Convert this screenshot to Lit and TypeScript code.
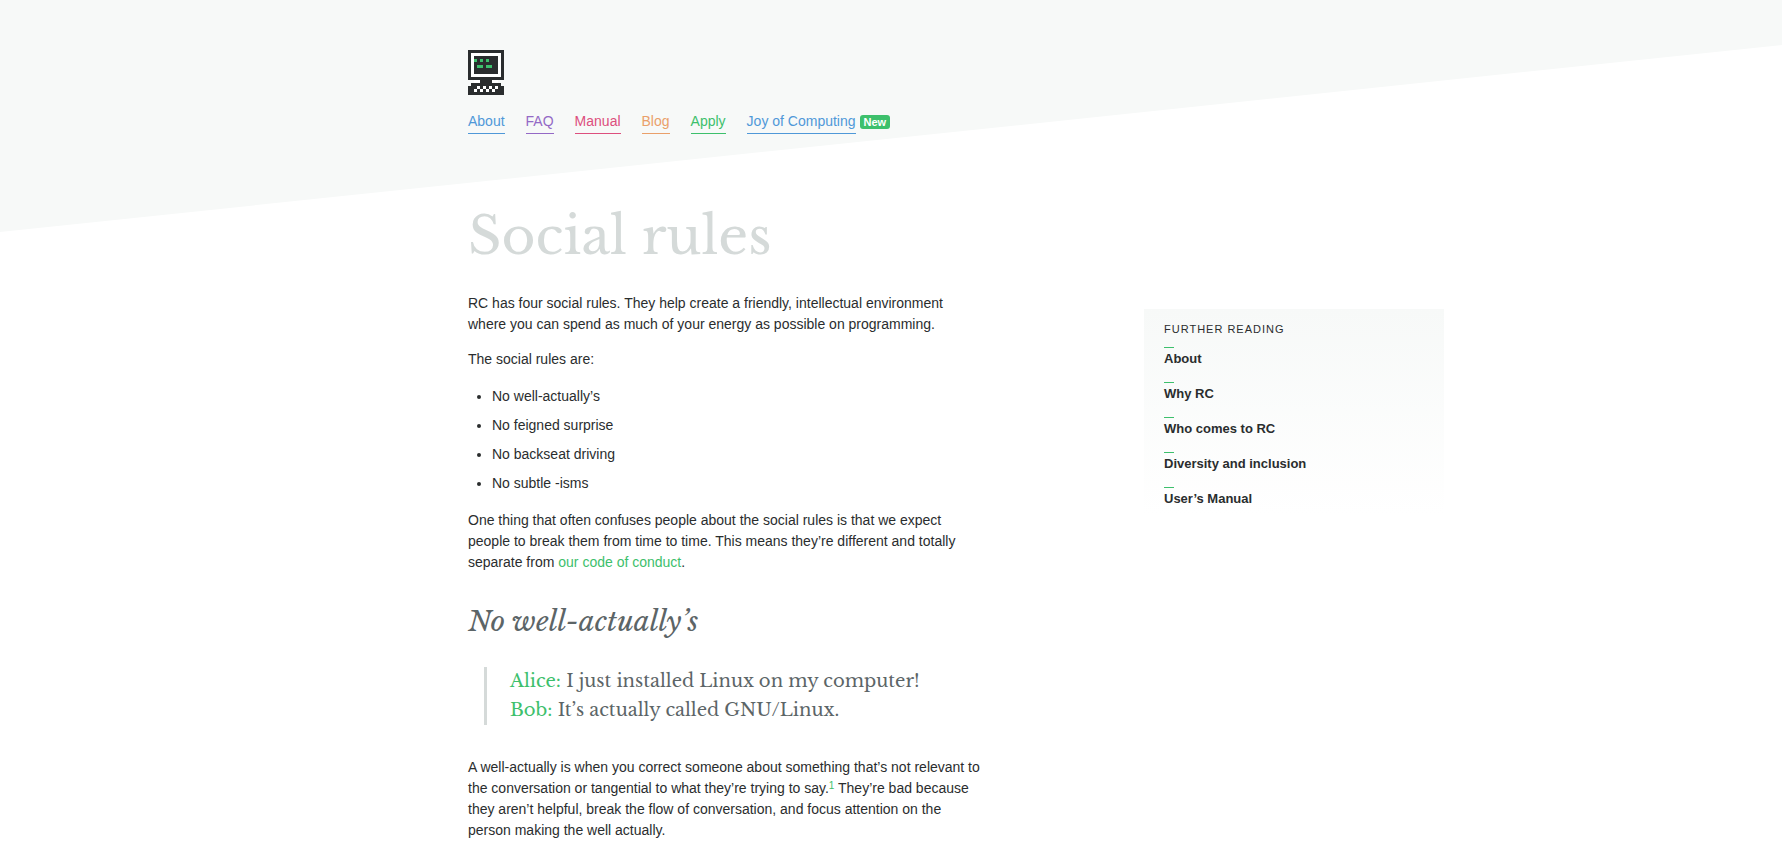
import { LitElement, html, svg, css } from "lit";
import { customElement } from "lit/decorators.js";

const NAV = [
  { label: "About", tone: "blue" },
  { label: "FAQ", tone: "purple" },
  { label: "Manual", tone: "pink" },
  { label: "Blog", tone: "orange" },
  { label: "Apply", tone: "green" },
  { label: "Joy of Computing", tone: "blue", badge: "New" },
];

const RULES = ["No well-actually’s", "No feigned surprise", "No backseat driving", "No subtle -isms"];

const READING = ["About", "Why RC", "Who comes to RC", "Diversity and inclusion", "User’s Manual"];

// One character per logo pixel: # dark, o white, g green, . clear.
const LOGO = [
  "############",
  "#oooooooooo#",
  "#o########o#",
  "#og#g#g###o#",
  "#o########o#",
  "#o#gg#gg##o#",
  "#o########o#",
  "#o########o#",
  "#oooooooooo#",
  "############",
  "..oo####oo..",
  ".##########.",
  "###o#o#o#o##",
  "##o#o#o#o###",
  "############",
];
const INK: Record<string, string> = { "#": "#2a2d2e", o: "#ffffff", g: "#3dc06c" };

@customElement("site-logo")
class SiteLogo extends LitElement {
  static styles = css`
    :host { display: block; }
    .logo { display: block; width: 36px; height: 45px; }
  `;
  render() {
    return html`<svg class="logo" viewBox="0 0 12 15" shape-rendering="crispEdges" role="img" aria-label="Recurse Center">
      ${LOGO.flatMap((row, y) =>
        [...row].map((c, x) => (INK[c] ? svg`<rect x=${x} y=${y} width="1" height="1" fill=${INK[c]}></rect>` : null)))}
    </svg>`;
  }
}

@customElement("app-root")
class AppRoot extends LitElement {
  static styles = css`
    :host {
      display: block;
      position: relative;
      overflow: hidden;
      min-height: 100vh;
      background: #fff;
      color: #2a2d2e;
      font: 14px/21px "Liberation Sans", Arial, sans-serif;
    }
    .slope {
      position: absolute;
      inset: 0 0 auto;
      height: 232px;
      background: #f7f9f8;
      clip-path: polygon(0 0, 100% 0, 100% 45px, 0 100%);
    }
    .page {
      position: relative;
      box-sizing: border-box;
      max-width: 1000px;
      margin-left: max(24px, calc(50% - 423px));
      padding: 50px 24px 0 0;
    }
    a { color: #3dc06c; text-decoration: none; }
    .nav { display: flex; flex-wrap: wrap; gap: 21px; margin-top: 14px; }
    .item { display: flex; align-items: center; gap: 4px; }
    .link { padding: 2px 0 1px; border-bottom: 1px solid; }
    .blue { color: #4f98d8; }
    .purple { color: #9469c6; }
    .pink { color: #dd4f7e; }
    .orange { color: #eaa06a; }
    .green { color: #3dc06c; }
    .badge {
      padding: 0 4px;
      border-radius: 3px;
      background: #3dc06c;
      color: #fff;
      font-size: 11px;
      line-height: 14px;
      font-weight: bold;
    }
    h1, h2, .quote { font-family: "Libre Baskerville", "Liberation Serif", serif; font-weight: normal; }
    h1 { margin: 64px 0 0; font-size: 52px; line-height: 76px; color: #d5dad9; }
    .columns { display: flex; justify-content: space-between; align-items: flex-start; gap: 24px; margin-top: 19px; }
    .article { flex: 0 1 514px; }
    p { margin: 0 0 14px; }
    .rules { display: grid; gap: 8px; margin: 16px 0; padding-left: 24px; }
    h2 { margin: 31px 0 27px; font-size: 28px; line-height: 36px; font-style: italic; color: #5c6567; }
    .quote {
      margin: 0 0 32px 16px;
      padding-left: 23px;
      border-left: 3px solid #d5dad9;
      font-size: 18px;
      line-height: 29px;
      color: #5c6567;
    }
    .quote p { margin: 0; }
    .speaker { color: #3dc06c; }
    sup { font-size: 10px; line-height: 0; vertical-align: 4px; }
    .aside {
      box-sizing: border-box;
      flex: 0 0 300px;
      margin-top: 16px;
      padding: 10px 20px 4px;
      background: linear-gradient(#f7f9f8, #fff);
    }
    h3 { margin: 0; font-size: 11px; line-height: 20px; font-weight: normal; letter-spacing: 1px; text-transform: uppercase; }
    .reading { display: grid; gap: 12px; margin: 8px 0 0; padding: 0; list-style: none; }
    .reading a { display: block; color: #2a2d2e; font-size: 13px; line-height: 22px; font-weight: bold; }
    .reading a::before { content: ""; display: block; width: 10px; height: 1px; background: #3dc06c; }
  `;

  render() {
    return html`
      <div class="slope"></div>
      <div class="page">
        <header>
          <site-logo></site-logo>
          <nav class="nav">
            ${NAV.map((n) => html`<div class="item"><a class="link ${n.tone}" href="#">${n.label}</a>${n.badge ? html`<span class="badge">${n.badge}</span>` : null}</div>`)}
          </nav>
        </header>
        <h1>Social rules</h1>
        <div class="columns">
          <main class="article">
            <p>RC has four social rules. They help create a friendly, intellectual environment where you can spend as much of your energy as possible on programming.</p>
            <p>The social rules are:</p>
            <ul class="rules">${RULES.map((r) => html`<li>${r}</li>`)}</ul>
            <p>One thing that often confuses people about the social rules is that we expect people to break them from time to time. This means they’re different and totally separate from <a href="#">our code of conduct</a>.</p>
            <h2>No well-actually’s</h2>
            <blockquote class="quote">
              <p><span class="speaker">Alice:</span> I just installed Linux on my computer!</p>
              <p><span class="speaker">Bob:</span> It’s actually called GNU/Linux.</p>
            </blockquote>
            <p>A well-actually is when you correct someone about something that’s not relevant to the conversation or tangential to what they’re trying to say.<sup><a href="#">1</a></sup> They’re bad because they aren’t helpful, break the flow of conversation, and focus attention on the person making the well actually.</p>
          </main>
          <aside class="aside">
            <h3>Further reading</h3>
            <ul class="reading">${READING.map((r) => html`<li><a href="#">${r}</a></li>`)}</ul>
          </aside>
        </div>
      </div>
    `;
  }
}
